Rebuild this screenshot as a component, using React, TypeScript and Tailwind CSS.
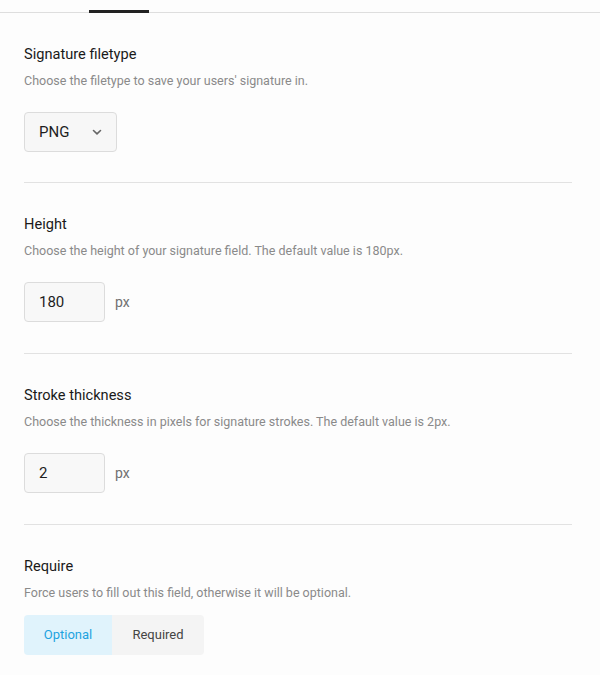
import React from "react";

function ChevronDown() {
  return (
    <svg width="12" height="12" viewBox="0 0 12 12" fill="none" className="ml-auto">
      <path d="M2.5 4.5 L6 7.8 L9.5 4.5" stroke="#666" strokeWidth="1.6" strokeLinecap="round" strokeLinejoin="round" />
    </svg>
  );
}

function Section({
  title,
  desc,
  children,
  divider = true,
  pb = "pb-[31px]",
  gap = "mt-[21px]",
}: {
  title: string;
  desc: string;
  children: React.ReactNode;
  divider?: boolean;
  pb?: string;
  gap?: string;
}) {
  return (
    <div className={(divider ? "border-b border-[#e2e2e2] " : "") + "pt-[31px] " + pb}>
      <div className="text-[14.6px] leading-[20px] text-[#1a1a1a]">{title}</div>
      <div className="mt-[7px] text-[12.5px] leading-[20px] text-[#8a8a8a]">{desc}</div>
      <div className={gap}>{children}</div>
    </div>
  );
}

function PxInput({ value }: { value: string }) {
  return (
    <div className="flex items-center">
      <div className="w-[81px] h-[40px] rounded-[4px] border border-[#dcdcdc] bg-[#f8f8f8] flex items-center pl-[14px] text-[15px] text-[#1e1e1e]">
        {value}
      </div>
      <span className="ml-[10px] text-[14px] text-[#707070]">px</span>
    </div>
  );
}

export default function App() {
  return (
    <div className="w-[600px] h-[675px] bg-[#fdfdfd] overflow-hidden" style={{ fontFamily: "Roboto, 'Liberation Sans', sans-serif" }}>
      <div className="h-[13px] border-b border-[#dedede] relative">
        <div className="absolute left-[89px] top-[10px] w-[60px] h-[3px] bg-[#222]" />
      </div>
      <div className="ml-[24px] w-[548px]">
        <Section title="Signature filetype" desc="Choose the filetype to save your users' signature in." pb="pb-[30px]">
          <div className="w-[93px] h-[40px] rounded-[4px] border border-[#dcdcdc] bg-[#f7f7f7] flex items-center pl-[14px] pr-[13px] text-[15px] text-[#1e1e1e]">
            PNG
            <ChevronDown />
          </div>
        </Section>
        <Section title="Height" desc="Choose the height of your signature field. The default value is 180px.">
          <PxInput value="180" />
        </Section>
        <Section title="Stroke thickness" desc="Choose the thickness in pixels for signature strokes. The default value is 2px.">
          <PxInput value="2" />
        </Section>
        <Section
          title="Require"
          desc="Force users to fill out this field, otherwise it will be optional."
          divider={false}
          pb="pb-[20px]"
          gap="mt-[12px]"
        >
          <div className="flex w-fit rounded-[4px] overflow-hidden text-[13px] h-[40px]">
            <div className="w-[88px] bg-[#e0f3fc] text-[#1ea3e0] flex items-center justify-center">Optional</div>
            <div className="w-[92px] bg-[#f4f4f4] text-[#444] flex items-center justify-center">Required</div>
          </div>
        </Section>
      </div>
    </div>
  );
}
